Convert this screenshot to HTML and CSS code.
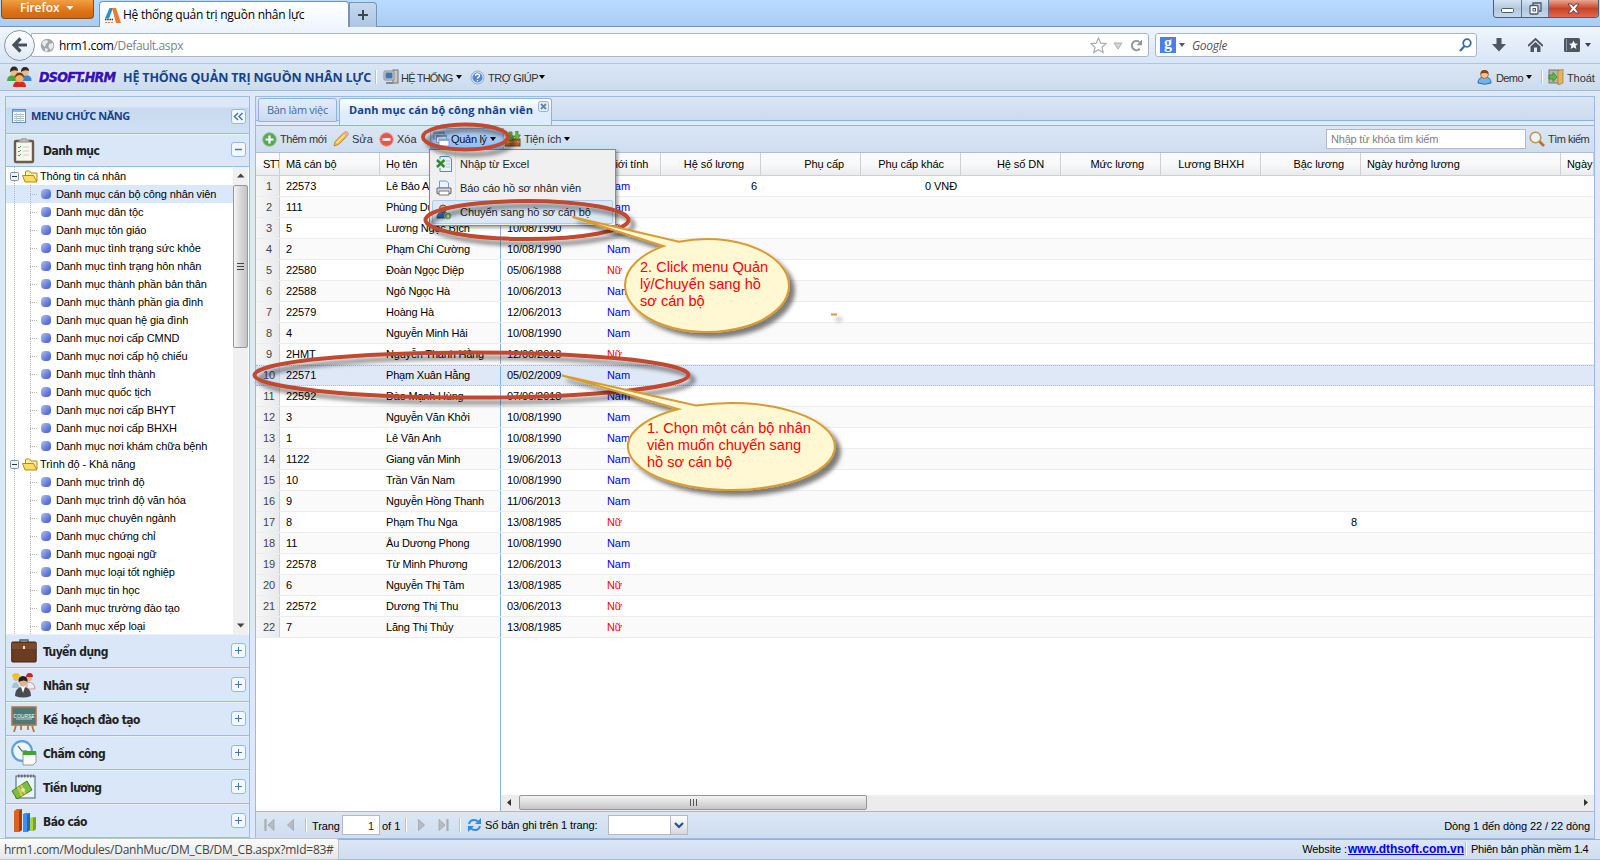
FILE: index.html
```html
<!DOCTYPE html>
<html lang="vi">
<head>
<meta charset="utf-8">
<title>Hệ thống quản trị nguồn nhân lực</title>
<link rel="stylesheet" href="styles.css">
</head>
<body>
<div class="window">
  <div class="titlebar">
    <div class="fx-button">Firefox<i class="caret white"></i></div>
    <div class="fx-tab">
      <svg width="18" height="17" viewBox="0 0 18 17"><path d="M5.500 1H9L5 11.500H1z" fill="#2a8fd0"/><path d="M8 1h4l5 15h-5z" fill="#ee7a2b"/><path d="M1 12.500h8" stroke="#333" stroke-dasharray="1.500 .7" stroke-width="1.600"/><path d="M1 15.500h9" stroke="#ee7a2b" stroke-dasharray="2 1"/></svg>
      <span>Hệ thống quản trị nguồn nhân lực</span>
    </div>
    <div class="fx-newtab"><svg width="12" height="12"><path d="M6 1v10M1 6h10" stroke="#3c4752" stroke-width="2"/></svg></div>
    <div class="fill"></div>
    <div class="win-buttons">
      <div class="wb min"><svg width="13" height="6"><rect x=".5" y=".5" width="12" height="4" rx="1" fill="#fff" stroke="#4b5a68"/></svg></div>
      <div class="wb max"><svg width="13" height="13"><path d="M4 3V1h8v8h-2" fill="none" stroke="#4b5a68" stroke-width="1.3"/><rect x="1" y="3.5" width="8" height="8.5" rx="1" fill="#fff" stroke="#4b5a68" stroke-width="1.3"/><rect x="4" y="6.5" width="2.5" height="2.5" fill="none" stroke="#4b5a68"/></svg></div>
      <div class="wb close"><svg width="13" height="11" viewBox="0 0 13 11"><path d="M1 1h3.4l2 2.4L8.500 1H12L8.500 5.500 12 10H8.500l-2-2.500L4.400 10H1l3.500-4.500z" fill="#fff" stroke="#5a3440" stroke-width=".9"/></svg></div>
    </div>
  </div>

  <div class="navbar">
    <div class="back"><svg width="16" height="16" viewBox="0 0 16 16"><path d="M8.500 1.500L2 8l6.500 6.500M2.500 8H15" fill="none" stroke="#46525e" stroke-width="3.200"/></svg></div>
    <div class="urlbar">
      <svg class="globe" width="15" height="15" viewBox="0 0 15 15"><circle cx="7.500" cy="7.500" r="6.800" fill="#a3a7ab"/><path d="M3 3l4-1 1 2-2 2-1 3-3-3zM9 6l4-1 .5 4-3 3-2-3zM5 10l3 1-1 3-2-1z" fill="#e9ebed"/></svg>
      <span class="url">hrm1.com<em>/Default.aspx</em></span>
      <div class="fill"></div>
      <svg width="17" height="17" viewBox="0 0 17 17"><path d="M8.500 1l2.200 5.100 5.400.5-4.100 3.600 1.200 5.400-4.700-2.900-4.700 2.900L5 10.200.9 6.600l5.400-.5z" fill="#fff" stroke="#a9adb2" stroke-width="1.200"/></svg>
      <svg class="drop" width="10" height="8"><path d="M1 1h8L5 7z" fill="#d2d5d9" stroke="#a9adb2"/></svg>
      <svg width="13" height="13" viewBox="0 0 13 13"><path d="M9.800 9.800A4.600 4.600 0 1 1 9.300 3" fill="none" stroke="#8e959d" stroke-width="2"/><path d="M12 .5v5.700H6.500z" fill="#8e959d"/></svg>
    </div>
    <div class="searchbar">
      <b class="g">g</b><i class="caret gray"></i><em>Google</em><div class="fill"></div>
      <svg width="13" height="14" viewBox="0 0 13 14"><circle cx="8" cy="5" r="3.800" fill="none" stroke="#3d6c9e" stroke-width="1.800"/><path d="M5.500 8L1 13" stroke="#3d6c9e" stroke-width="2.200"/></svg>
    </div>
    <div class="nav-icons">
      <svg width="14" height="14"><path d="M4.500 0h5v6H14l-7 7.500L0 6h4.500z" fill="#4c5761"/></svg>
      <svg width="15" height="14" viewBox="0 0 15 14"><path d="M0 8L7.500 1 15 8" fill="none" stroke="#4c5761" stroke-width="1.800"/><path d="M2.500 8.500l5-4.500 5 4.500V14H9V9.500H6V14H2.500z" fill="#4c5761"/></svg>
      <span class="bm"><svg width="16" height="14" viewBox="0 0 16 14"><rect width="16" height="14" rx="1.500" fill="#4c5761"/><path d="M2.500 1v12" stroke="#8894a0"/><path d="M9.500 2.500l1.300 3 3.200.2-2.400 2 .8 3.300-2.900-1.700-2.900 1.700.8-3.300-2.400-2 3.200-.2z" fill="#fff"/></svg><i class="caret"></i></span>
    </div>
  </div>

  <div class="appbar">
    <svg class="people" width="25" height="22" viewBox="0 0 25 22"><path d="M0 15q0-6 6.500-6t6.500 6z" fill="#4ca63a"/><path d="M12 15q0-6 6.500-6t6 6z" fill="#3d86d4"/><circle cx="7" cy="6" r="3.700" fill="#eebb85"/><circle cx="18" cy="6" r="3.700" fill="#eebb85"/><path d="M3 6q0-5.500 4-5.500T11 5Q7 3 3 6zM14 6q0-5 4-5t4 4q-4-2-8 1z" fill="#2f2925"/><path d="M6 21q0-6 6.500-6t6.500 6z" fill="#d9291c"/><circle cx="12.500" cy="12" r="4.200" fill="#f2b65f"/><path d="M8 12q0-5.500 4.500-5.500T17 12q-2-3-4.500-3T8 12z" fill="#7b3a16"/></svg>
    <span class="logo">DSOFT.HRM</span>
    <span class="app-title">HỆ THỐNG QUẢN TRỊ NGUỒN NHÂN LỰC</span>
    <i class="vsep"></i>
    <svg class="ic-sys" width="16" height="16" viewBox="0 0 16 16"><rect x="10" y="1" width="5" height="13" fill="#c7c9c4" stroke="#777"/><rect x="1" y="2" width="10" height="9" rx="1" fill="#d8d8d2" stroke="#888"/><rect x="2.500" y="3.500" width="7" height="6" fill="#3f75b8"/><path d="M3 14h7" stroke="#888" stroke-width="2"/></svg>
    <span class="t-sys">HỆ THỐNG</span><i class="caret"></i>
    <svg class="ic-help" width="15" height="15" viewBox="0 0 15 15"><circle cx="7.500" cy="7.500" r="6.500" fill="#d8e8f8" stroke="#8fb0d6"/><circle cx="7.500" cy="7.500" r="5" fill="#5689c6"/><path d="M5.500 6q0-2 2-2t2 1.800q0 1-1.200 1.500-.8.400-.8 1.400M7.500 10v1.300" fill="none" stroke="#fff" stroke-width="1.300"/></svg>
    <span class="t-help">TRỢ GIÚP</span><i class="caret"></i>
    <div class="fill"></div>
    <svg width="15" height="16" viewBox="0 0 15 16"><path d="M1 14q0-6 6.500-6T14 14q-6 2.500-13 0z" fill="#6db5ef" stroke="#2d6cb0"/><circle cx="7.500" cy="5.500" r="3.900" fill="#f4c28c" stroke="#8b4a1b" stroke-width=".7"/><path d="M3.500 5Q3.500 1 7.500 1t4 4q-4-2-8 0z" fill="#8c4512"/></svg>
    <span class="t-demo">Demo</span><i class="caret"></i>
    <i class="vsep r"></i>
    <svg width="16" height="16" viewBox="0 0 16 16"><rect x="1" y="1" width="10" height="13" fill="#b4b6ac" stroke="#77786f"/><path d="M10 2l5-2v14l-5 2z" fill="#eab25c" stroke="#a87328" stroke-width=".7"/><path d="M1 6h4V3.500L9 8l-4 4.500V10H1z" fill="#5cbb3d" stroke="#2e7d1c" stroke-width=".7"/></svg>
    <span class="t-exit">Thoát</span>
  </div>

  <div class="workspace">
    <div class="sidebar">
      <div class="side-head">
        <svg width="14" height="14"><rect x=".5" y=".5" width="13" height="13" fill="#fff" stroke="#5d8fc6"/><path d="M1 2h12" stroke="#8db6e4" stroke-width="2"/><path d="M2 5.500h10M2 7.500h10M2 9.500h10M2 11.500h10" stroke="#b7b7a9"/><path d="M4.500 4v9M8.500 4v9" stroke="#b5cfea"/></svg>
        <span>MENU CHỨC NĂNG</span>
        <i class="tool"><svg width="11" height="9"><path d="M5 1L1.500 4.500 5 8M9.500 1L6 4.500 9.500 8" fill="none" stroke="#4479b8" stroke-width="1.500"/></svg></i>
      </div>
      <div class="acc open">
        <svg width="26" height="26" viewBox="0 0 26 26"><rect x="4" y="3" width="18" height="21" rx="1" fill="#f8f7ef" stroke="#6d5b4b" stroke-width="2.400"/><path d="M8 4V2h3V0h4v2h3v2z" fill="#b9b9b9" stroke="#888" stroke-width=".6"/><path d="M7 9l1 1 2-2M7 13l1 1 2-2M7 17l1 1 2-2" fill="none" stroke="#53a544"/><path d="M12 9h6M12 13h6M12 17h6" stroke="#ccc"/></svg>
        <span>Danh mục</span><i class="tool"><svg width="9" height="9"><path d="M1 4.500h7" stroke="#4479b8" stroke-width="1.500"/></svg></i>
      </div>
      <div class="tree-wrap">
        <div class="tree" id="tree"></div>
        <div class="vscroll"><svg width="15" height="18"><path d="M4 10.500h7.500L7.700 6.500z" fill="#444"/></svg><div class="vthumb"><i></i><i></i><i></i></div><div class="fill"></div><svg width="15" height="17"><path d="M4 6.500h7.500L7.700 10.500z" fill="#444"/></svg></div>
      </div>
      <div class="acc">
        <svg width="26" height="26" viewBox="0 0 26 26"><path d="M9 4V2h8v2" fill="none" stroke="#555" stroke-width="1.300"/><rect x=".7" y="4" width="24.500" height="20" rx="1" fill="#6b3d20" stroke="#432513"/><path d="M1 5h24v6H1z" fill="#7d4b2a"/><rect x="12" y="8" width="2" height="3" fill="#f4e8c8"/></svg>
        <span>Tuyển dụng</span><i class="tool plus"></i></div>
      <div class="acc">
        <svg width="26" height="26" viewBox="0 0 26 26"><circle cx="5" cy="6" r="3" fill="#e9b48b"/><path d="M1 5q0-4 4-4t4 4z" fill="#f2c21b"/><path d="M1 16q0-6 5-6l3 6z" fill="#9fc6d9"/><circle cx="18" cy="6" r="3" fill="#e9b48b"/><path d="M15 5q0-4 3.500-4T22 5z" fill="#cf2222"/><path d="M16 10q8 0 8 7h-8z" fill="#eee" stroke="#c99"/><path d="M4 24q0-9 8-9t8 9q-8 3-16 0z" fill="#4a4d50"/><path d="M10 15l2 6 2-6z" fill="#fff"/><circle cx="12" cy="10" r="4.200" fill="#e6b187"/><path d="M7.500 10q-.5-6 4.500-6t4.500 6q-3-3-9 0z" fill="#222"/></svg>
        <span>Nhân sự</span><i class="tool plus"></i></div>
      <div class="acc">
        <svg width="26" height="26" viewBox="0 0 26 26"><path d="M5 19l-2 7M21 19l2 7M10 19v5M17 19v5" stroke="#b87447" stroke-width="1.800"/><rect x="1" y="1" width="24" height="18" fill="#4d7a74" stroke="#b87447" stroke-width="1.600"/><text x="13" y="11.500" class="board">COURSE</text><path d="M5 13h16" stroke="#dfe9e6" stroke-width=".8"/></svg>
        <span>Kế hoạch đào tạo</span><i class="tool plus"></i></div>
      <div class="acc">
        <svg width="26" height="26" viewBox="0 0 26 26"><circle cx="11" cy="11" r="9.800" fill="#eef6fd" stroke="#5b9fdb" stroke-width="2.200"/><path d="M7 6l4 5h5" fill="none" stroke="#555" stroke-width="1.200"/><path d="M12 12h13v10l-3 3H12z" fill="#fafafa" stroke="#999"/><path d="M12 11h13v4H12z" fill="#42a42b"/></svg>
        <span>Chấm công</span><i class="tool plus"></i></div>
      <div class="acc">
        <svg width="26" height="26" viewBox="0 0 26 26"><rect x="5" y="2" width="19" height="22" fill="#eaf3f8" stroke="#49606d"/><path d="M7 2h16" stroke="#667" stroke-width="3" stroke-dasharray="1.500 1.500"/><path d="M1 17l15-10 5 9-15 9z" fill="#7cbf3f" stroke="#477f21"/><path d="M7 13l4 9M10 11l4 9" stroke="#eac346" stroke-width="2"/><circle cx="12" cy="16" r="2" fill="#d6ecb0"/></svg>
        <span>Tiền lương</span><i class="tool plus"></i></div>
      <div class="acc last">
        <svg width="26" height="26" viewBox="0 0 26 26"><path d="M3 3l3-2h5v21l-3 2H3z" fill="#d9641f"/><path d="M8 3l3-2v21l-3 2z" fill="#a33f0b"/><path d="M12 6l2-1h5v17l-3 2h-4z" fill="#3f90ea"/><path d="M16 7l3-2v17l-3 2z" fill="#2566ba"/><path d="M19 10l2-1h4v12l-2 2h-4z" fill="#a8d63e"/><path d="M22 10l3-1v12l-3 2z" fill="#76a71e"/></svg>
        <span>Báo cáo</span><i class="tool plus"></i></div>
    </div>

    <div class="main">
      <div class="tabs">
        <div class="tab">Bàn làm việc</div>
        <div class="tab active">Danh mục cán bộ công nhân viên<svg class="tabx" width="11" height="11"><rect x=".5" y=".5" width="10" height="10" rx="2" fill="#e5effb" stroke="#8fb1dc"/><path d="M3 3l5 5M8 3L3 8" stroke="#5f84b5" stroke-width="1.800"/></svg></div>
      </div>
      <div class="toolbar">
        <svg width="15" height="15"><circle cx="7.500" cy="7.500" r="6.800" fill="#58a754" stroke="#8cc488"/><path d="M7.500 3.500v8M3.500 7.500h8" stroke="#fff" stroke-width="2.200"/></svg>
        <span class="b-add">Thêm mới</span>
        <svg width="16" height="16" viewBox="0 0 16 16"><path d="M1 15l1.200-4.500L11 1.500q2-1.500 3.500 0t0 3.300L5.500 13.500z" fill="#f6bb3d" stroke="#b9832a" stroke-width=".9"/><path d="M3.500 12L12 3.500" stroke="#fde6a2" stroke-width="1.500"/><path d="M11 1.500q2-1.500 3.500 0t0 3.300l-1 1L10 2.500z" fill="#eea99a"/></svg>
        <span class="b-edit">Sửa</span>
        <svg width="15" height="15"><circle cx="7.500" cy="7.500" r="6.800" fill="#e3574e" stroke="#ef9d96"/><path d="M3.500 7.500h8" stroke="#fff" stroke-width="2.600"/></svg>
        <span class="b-del">Xóa</span>
        <div class="b-manage">
          <svg width="17" height="16" viewBox="0 0 17 16"><rect x="1" y="1" width="10" height="7" fill="#c9d9ec" stroke="#7391b8"/><rect x="3.500" y="4.500" width="10" height="7" fill="#dce8f5" stroke="#7391b8"/><rect x="6" y="8" width="10" height="7" fill="#fff" stroke="#86a2c8"/><path d="M1 2h10M3.500 5.500h10M6 9h10" stroke="#6b92c8" stroke-width="1.600"/></svg>
          <span>Quản lý</span><i class="caret"></i>
        </div>
        <svg class="ic-util" width="17" height="16" viewBox="0 0 17 16"><rect x="1" y="8" width="15" height="7" fill="#b3652a" stroke="#7d3f14"/><path d="M1 11h15" stroke="#db9457"/><path d="M5 1h3v4h3L6.500 10 2 5h3zM11 0h3v4h2.500L13 9l-2-2" fill="#6cbb3a" stroke="#357f1b" stroke-width=".7"/></svg>
        <span class="b-util">Tiện ích</span><i class="caret"></i>
        <div class="fill"></div>
        <div class="search">Nhập từ khóa tìm kiếm</div>
        <svg width="16" height="16" viewBox="0 0 16 16"><circle cx="6.500" cy="6.500" r="5.300" fill="#e9f3fb" stroke="#c98e4c" stroke-width="1.500"/><path d="M10.500 10.500l4.500 4.500" stroke="#b8722b" stroke-width="2.600"/></svg>
        <span class="b-find">Tìm kiếm</span>
      </div>

      <div class="grid" id="grid"></div>
      <div class="bottom">
        <div class="lock-foot"></div>
        <div class="hscroll"><svg width="18" height="16"><path d="M10 4v7L6 7.500z" fill="#333"/></svg><div class="hthumb"><i></i><i></i><i></i></div><div class="fill"></div><svg width="17" height="16"><path d="M7 4v7l4-3.500z" fill="#333"/></svg></div>
      </div>
      <div class="pager">
        <svg class="p1" width="11" height="12"><path d="M1.500 0v12" stroke="#a9adb3" stroke-width="2.200"/><path d="M10 .5v11L4 6z" fill="#b8bcc2" stroke="#999ea6" stroke-width=".7"/></svg>
        <svg class="p2" width="7" height="12"><path d="M6.500.5v11L.5 6z" fill="#b8bcc2" stroke="#999ea6" stroke-width=".7"/></svg>
        <i class="vsep s1"></i><span class="p-page">Trang</span><div class="p-num">1</div><span class="p-of">of 1</span><i class="vsep s2"></i>
        <svg class="p3" width="7" height="12"><path d="M.5.5v11L6.500 6z" fill="#b8bcc2" stroke="#999ea6" stroke-width=".7"/></svg>
        <svg class="p4" width="11" height="12"><path d="M9.500 0v12" stroke="#a9adb3" stroke-width="2.200"/><path d="M1 .5v11L7 6z" fill="#b8bcc2" stroke="#999ea6" stroke-width=".7"/></svg>
        <i class="vsep s3"></i>
        <svg class="p5" width="15" height="14" viewBox="0 0 15 14"><path d="M2 6q1-4 5-4 2.500 0 4 1.500" fill="none" stroke="#2e8be0" stroke-width="2"/><path d="M14 0v6H8z" fill="#2e8be0"/><path d="M13 8q-1 4-5 4-2.500 0-4-1.500" fill="none" stroke="#2e8be0" stroke-width="2"/><path d="M1 14V8h6z" fill="#2e8be0"/></svg>
        <span class="p-size">Số bản ghi trên 1 trang:</span>
        <div class="combo"><div class="trigger"><svg width="10" height="7"><path d="M1 1l4 4 4-4" fill="none" stroke="#2c4f8f" stroke-width="2.200"/></svg></div></div>
        <div class="fill"></div>
        <span class="p-info">Dòng 1 đến dòng 22 / 22 dòng</span>
      </div>
    </div>
  </div>

  <div class="footer">
    <span class="f-web">Website :</span><a class="f-link">www.dthsoft.com.vn</a><i class="vsep"></i><span class="f-ver">Phiên bản phần mềm 1.4</span>
  </div>

  <div class="menu">
    <div class="mi"><svg width="16" height="16" viewBox="0 0 16 16"><path d="M4 .5h9l2.500 2.500v12.500H4z" fill="#eaf2fc" stroke="#5a86c0"/><path d="M7 5h7M7 8h7M7 11h7" stroke="#a9c4e4"/><rect y="3" width="10" height="9" fill="#dff0d8"/><path d="M1 4l7.500 7M8.500 4L1 11" stroke="#318a31" stroke-width="2.400"/></svg><span>Nhập từ Excel</span></div>
    <div class="mi"><svg width="16" height="16" viewBox="0 0 16 16"><path d="M3.500 8V1h7l2 2v5z" fill="#eaf3fd" stroke="#6f9dcf"/><path d="M1 8h14v5.500H1z" fill="#d9dbde" stroke="#63686f"/><path d="M3 11h10v4H3z" fill="#fff" stroke="#777"/></svg><span>Báo cáo hồ sơ nhân viên</span></div>
    <div class="mi sel"><svg width="16" height="16" viewBox="0 0 16 16"><circle cx="7" cy="4.500" r="3.500" fill="#d59d70" stroke="#7c4b25"/><path d="M1 14q0-6 6-6t6 6z" fill="#3f79b8" stroke="#275585"/><circle cx="12" cy="12" r="3.500" fill="#4ea13e" stroke="#fff" stroke-width=".6"/><path d="M12 10v4M10 12h4" stroke="#fff" stroke-width="1.200"/></svg><span>Chuyển sang hồ sơ cán bộ</span></div>
  </div>

  <svg class="notes" width="1600" height="860">
    <defs><filter id="sh" x="-20%" y="-40%" width="150%" height="200%"><feDropShadow dx="5" dy="5" stdDeviation="2" flood-color="#000" flood-opacity=".5"/></filter></defs>
    <g fill="none" stroke="#c0482f" stroke-width="4" filter="url(#sh)">
      <ellipse cx="465.500" cy="137" rx="42.500" ry="12.500"/>
      <ellipse cx="527" cy="220" rx="101.500" ry="19"/>
      <ellipse cx="471.500" cy="375" rx="217" ry="22.500"/>
    </g>
    <g fill="#fff8d3" stroke="#d99b2e" stroke-width="2" filter="url(#sh)">
      <path d="M572.500 217L679 241.800A82 46.500 0 1 1 663.500 246.083z"/>
      <path d="M562 375.500L696 405.600A103.500 43.500 0 1 1 678.500 409.080z"/>
      <path d="M831 314.500h6"/>
    </g>
    <g class="note-text">
      <text x="640" y="272">2. Click menu Quản</text><text x="640" y="289">lý/Chuyển sang hồ</text><text x="640" y="306">sơ cán bộ</text>
      <text x="647" y="433">1. Chọn một cán bộ nhân</text><text x="647" y="450">viên muốn chuyển sang</text><text x="647" y="467">hồ sơ cán bộ</text>
    </g>
  </svg>
  <div class="status">hrm1.com/Modules/DanhMuc/DM_CB/DM_CB.aspx?mId=83#</div>
</div>
<script src="app.js"></script>
</body>
</html>
```
FILE: styles.css
```css
* { box-sizing: border-box; }
body { margin: 0; background: #dfe8f6; font: 11px/14px "Liberation Sans", Arial, sans-serif; color: #000; overflow: hidden; }
svg { display: block; flex: none; }
i, em { font-style: normal; }
.window { position: relative; width: 1600px; height: 860px; display: flex; flex-direction: column; overflow: hidden; white-space: nowrap; }
.fill { flex: 1; }
.caret { flex: none; width: 6px; height: 4px; background: #000; clip-path: polygon(0 0, 100% 0, 50% 100%); margin-left: 2px; }
.vsep { flex: none; width: 2px; height: 14px; background: #98c8ff; border-right: 1px solid #fff; }

.titlebar { height: 27px; display: flex; align-items: flex-start; padding: 0 1px; background: linear-gradient(#b9dbff, #a9cdf4); border-bottom: 1px solid #7894b0; font-family: "Open Sans", sans-serif; }
.fx-button { width: 93px; height: 19px; padding: 0 0 2px 18px; display: flex; align-items: center; background: linear-gradient(#f0a044, #dd7415 60%, #cf6a10); border: 1px solid #8c4b14; border-top: 0; border-radius: 0 0 4px 4px; color: #fff; font-weight: 600; font-size: 12px; letter-spacing: -.1px; }
.caret.white { width: 7px; height: 4px; background: #fff; margin-left: 7px; }
.fx-tab { width: 250px; height: 27px; margin: 1px 0 -1px 5px; padding-left: 4px; display: flex; align-items: center; gap: 1px; background: linear-gradient(#fff, #eff6fe); border: 1px solid #7894b0; border-bottom: 0; border-radius: 4px 4px 0 0; font-size: 12px; letter-spacing: -.25px; }
.fx-newtab { width: 28px; height: 25px; margin-top: 2px; display: grid; place-items: center; background: linear-gradient(#c4d9ee, #adc6e0); border: 1px solid #7894b0; border-radius: 0 4px 0 0; border-bottom: 0; }
.win-buttons { display: flex; height: 18px; border: 1px solid #4b5f74; border-top: 0; border-radius: 0 0 4px 4px; overflow: hidden; }
.wb { display: grid; place-items: center; background: linear-gradient(#d6e4f2, #b3c8de 50%, #c3d8ec); border-right: 1px solid #5e7489; }
.min { width: 28px; padding-top: 4px; } .max { width: 27px; }
.close { width: 49px; border: 0; background: linear-gradient(#eaa793, #c9432a 50%, #e0694c); }

.navbar { height: 37px; display: flex; align-items: center; padding: 0 9px 0 4px; background: linear-gradient(#eef5fd, #d9e5f5); border-bottom: 1px solid #b0c4da; font-family: "Open Sans", sans-serif; font-size: 12px; }
.back { width: 31px; height: 31px; border-radius: 50%; border: 1px solid #8394a6; background: linear-gradient(#fff, #dfe9f4); display: grid; place-items: center; z-index: 1; }
.urlbar { width: 1118px; height: 24px; margin-left: -4px; padding: 0 5px 0 8px; display: flex; align-items: center; background: #fff; border: 1px solid #a9b6c4; border-radius: 0 3px 3px 0; }
.url { margin: 1px 0 0 4px; letter-spacing: -.37px; } .url em { color: #7d8288; }
.urlbar > svg:nth-of-type(2) { margin-right: -4px; }
.drop { margin: 2px 7px 0 10px; }
.searchbar { width: 322px; height: 24px; margin-left: 6px; padding: 0 4px; display: flex; align-items: center; background: #fff; border: 1px solid #a9b6c4; border-radius: 3px; }
.g { width: 16px; height: 16px; background: #4a7df0; color: #fff; font: bold 16px/12px "Liberation Serif", serif; text-align: center; }
.caret.gray { background: #555; margin-left: 3px; }
.searchbar em { margin: 1px 0 0 7px; font-style: italic; color: #555; letter-spacing: -.3px; }
.nav-icons { flex: 1; margin-left: 15px; display: flex; justify-content: space-between; align-items: center; }
.bm { display: flex; align-items: center; } .bm .caret { width: 6px; height: 4px; background: #39434c; margin-left: 5px; }

.appbar { height: 27px; display: flex; align-items: center; padding: 0 5px 0 7px; background: linear-gradient(#dae6f3, #cddcec); border-bottom: 1px solid #9cbfd0; color: #333; }
.logo { margin-left: 7px; width: 77px; font: italic bold 14px/20px "DejaVu Sans Condensed", "DejaVu Sans", sans-serif; color: #3312b8; letter-spacing: -.7px; -webkit-text-stroke: .5px #3312b8; text-shadow: 0 0 2px #fff, 0 0 2px #fff, 0 0 3px #fff; }
.app-title { margin: 1px 0 0 7px; width: 248px; font: bold 12.500px/16px "Open Sans", sans-serif; color: #15428b; letter-spacing: -.16px; }
.appbar .vsep { margin-left: 4px; }
.ic-sys { margin-left: 6px; } .t-sys { margin: 1px 0 0 2px; width: 53px; letter-spacing: -.8px; }
.ic-help { margin-left: 8px; } .t-help { margin: 1px 0 0 3px; width: 49px; letter-spacing: -.5px; }
.t-demo { margin: 1px 0 0 4px; width: 28px; letter-spacing: -.6px; } .appbar .vsep.r { margin: 0 5px 0 9px; }
.t-exit { margin: 1px 0 0 3px; width: 28px; letter-spacing: -.1px; }

.workspace { flex: 1; display: flex; padding: 5px 5px 0; gap: 5px; min-height: 0; }
.sidebar { width: 245px; display: flex; flex-direction: column; border: 1px solid #99bbe8; border-bottom: 0; padding-bottom: 1px; }
.side-head { height: 37px; padding: 2px 3px 0 6px; display: flex; align-items: center; background: linear-gradient(#dde8f6 0 10px, #c8d9f0 11px, #d0dff3); border-bottom: 1px solid #99bbe8; color: #15428b; font: bold 11px/14px "Open Sans", sans-serif; }
.side-head span { margin-left: 5px; letter-spacing: -.45px; }
.tool { width: 15px; height: 15px; margin-left: auto; display: grid; place-items: center; background: #f3f8ff; border: 1px solid #94b8e6; border-radius: 3px; }
.tool.plus { background: linear-gradient(#4479b8, #4479b8) center/7px 1px no-repeat, linear-gradient(#4479b8, #4479b8) center/1px 7px no-repeat, #f3f8ff; }
.acc { height: 34px; flex: none; display: flex; align-items: center; padding: 0 3px 0 5px; background: #d9e7f8; border-bottom: 1px solid #99bbe8; border-top: 1px solid #e8f1fb; font: bold 12px/16px "DejaVu Sans Condensed", "DejaVu Sans", sans-serif; color: #222; }
.acc.open { height: 33px; }
.acc span { margin: 1px 0 0 6px; letter-spacing: -.55px; }
.acc .tool { margin-top: -3px; } .acc .tool.plus { margin-top: -1px; }
.board { font: italic 5px "Liberation Sans", sans-serif; fill: #fff; text-anchor: middle; }
.tree-wrap { flex: 1; display: flex; background: #fff; min-height: 0; }
.tree { flex: 1; overflow: hidden; }
.node { height: 18px; display: flex; align-items: center; padding-left: 35px; letter-spacing: -.12px; background: repeating-linear-gradient(#b5b5b5 0 1px, transparent 1px 2px) 8px 0/1px 100% no-repeat, repeating-linear-gradient(#b5b5b5 0 1px, transparent 1px 2px) 24px 0/1px 100% no-repeat, repeating-linear-gradient(90deg, #b5b5b5 0 1px, transparent 1px 2px) 24px 9px/7px 1px no-repeat; }
.node::before { content: ""; width: 10px; height: 10px; margin-right: 5px; border-radius: 4px; background: linear-gradient(135deg, #b4c0f2, #6079d8 65%, #4b64c8); }
.node.on { background-color: #d9e8fb; }
.node.folder { padding-left: 4px; background: repeating-linear-gradient(#b5b5b5 0 1px, transparent 1px 2px) 8px 0/1px 100% no-repeat; } .node.folder::before { display: none; }
.node .exp { margin-right: 3px; } .node .fold { margin-right: 2px; }
.vscroll { width: 15px; margin-right: 1px; background: #f0f0f1; display: flex; flex-direction: column; }
.vthumb { height: 163px; border: 1px solid #979797; border-radius: 2px; background: linear-gradient(90deg, #f5f5f5, #d8d8da 50%, #c4c4c8); display: flex; flex-direction: column; align-items: center; justify-content: center; gap: 2px; }
.vthumb i { width: 7px; height: 1px; background: #444; }

.main { flex: 1; display: flex; flex-direction: column; border: 1px solid #99bbe8; min-width: 0; background: #fff; }
.tabs { height: 29px; padding: 1px 0 0 2px; display: flex; gap: 2px; background: linear-gradient(#dbe6f5, #cbdbef 23px, #8db2e3 23px, #8db2e3 24px, #deecfd 24px); border-bottom: 1px solid #8db2e3; font: 11px/14px "Open Sans", sans-serif; color: #416aa3; }
.tab { width: 79px; height: 24px; padding: 4px 0 0 8px; border: 1px solid #8db2e3; border-radius: 3px 3px 0 0; background: linear-gradient(#e3edfa, #c9dbf2); letter-spacing: -.3px; }
.tab.active { width: 213px; height: 27px; padding-left: 9px; position: relative; border-bottom: 0; background: linear-gradient(#fff, #deecfd 14px); color: #15428b; font-weight: bold; letter-spacing: .1px; }
.tabx { position: absolute; right: 2px; top: 2px; }
.toolbar { height: 27px; display: flex; align-items: center; padding: 0 6px; background: linear-gradient(#dae6f4, #cfddef); border-bottom: 1px solid #a9bfd3; color: #333; }
.b-add { margin-left: 3px; width: 53px; letter-spacing: -.45px; } .b-edit { margin-left: 3px; width: 27px; } .b-del { margin-left: 3px; width: 33px; }
.b-manage { width: 74px; height: 22px; padding-left: 2px; display: flex; align-items: center; border: 1px solid #8cabd6; background: linear-gradient(#b9d3f3, #8dbafa); color: #111; }
.b-manage span { width: 37px; margin-left: 1px; letter-spacing: -.3px; }
.b-util { margin-left: 3px; width: 38px; letter-spacing: -.2px; }
.search { width: 200px; height: 20px; padding: 2px 4px; background: #fff; border: 1px solid #b5b8c8; color: #808080; margin-right: 3px; letter-spacing: -.2px; }
.b-find { margin-left: 3px; width: 40px; letter-spacing: -.5px; }

.grid { flex: 1; display: flex; flex-direction: column; min-height: 0; background: linear-gradient(#8db2e3, #8db2e3) 244px 0/1px 100% no-repeat; letter-spacing: -.08px; }
.row { flex: none; height: 21px; display: grid; grid-template-columns: 24px 100px 121px 100px 60px repeat(7, 100px) 200px 33px; border-bottom: 1px solid #ededed; }
.row span { padding: 3px 6px 0; overflow: hidden; border: 0; }
.row span:nth-child(3) { border-right: 1px solid #8db2e3; letter-spacing: -.2px; }
.row span:nth-child(n+6):nth-child(-n+12) { text-align: right; padding-right: 4px; }
.row span:first-child { background: linear-gradient(90deg, #f7f7f7, #e8eaed); border-right: 1px solid #d0d0d0; color: #444; text-align: center; padding: 3px 0 0 3px; }
.row:nth-child(odd) { background-color: #fafafa; }
.row.hd { height: 23px; background: linear-gradient(#fafafa, #f9f9f9 50%, #e9ebee); border-bottom: 1px solid #d0d0d0; }
.row.hd span { padding-top: 4px; border-right: 1px solid #d0d0d0; }
.row.hd span:first-child { background: none; padding: 4px 0 0 7px; color: #000; text-align: left; letter-spacing: -.6px; }
.row.hd span:nth-child(n+6):nth-child(-n+12) { padding-right: 16px; }
.row.sel { background: #dfe8f6; border-top: 1px dotted #a3bae9; border-bottom: 1px dotted #a3bae9; }
.row.sel span:first-child { background: #d4e0f2; } .row.sel span { padding-top: 2px; }
.male { color: #00f; } .female { color: #f00; }
.bottom { flex: none; height: 17px; display: flex; border-bottom: 1px solid #99bbe8; }
.lock-foot { width: 245px; border-right: 1px solid #8db2e3; }
.hscroll { flex: 1; display: flex; background: #ececec; }
.hthumb { width: 348px; height: 15px; border: 1px solid #979797; border-radius: 2px; background: linear-gradient(#f4f4f4, #dcdcdc 50%, #c6c6c6); display: flex; align-items: center; justify-content: center; gap: 2px; }
.hthumb i { width: 1px; height: 7px; background: #555; }
.pager { flex: none; height: 26px; display: flex; align-items: center; padding: 0 4px 0 8px; background: linear-gradient(#dbe7f4, #cfddef); }
.p2 { margin-left: 12px; } .s1 { margin-left: 11px; } .p-page { margin: 1px 0 0 5px; width: 30px; letter-spacing: -.1px; }
.p-num { width: 38px; height: 20px; padding: 3px 5px; text-align: right; background: #fff; border: 1px solid #b5b8c8; color: #222; }
.p-of { margin: 1px 0 0 2px; width: 23px; } .p3 { margin-left: 11px; } .p4 { margin-left: 13px; } .s3 { margin-left: 10px; }
.p5 { margin-left: 6px; } .p-size { margin-left: 3px; width: 123px; letter-spacing: -.1px; }
.combo { width: 80px; height: 20px; background: #fff; border: 1px solid #b5b8c8; display: flex; justify-content: flex-end; }
.trigger { width: 17px; border-left: 1px solid #b5b8c8; background: linear-gradient(#fff, #d5d8de); display: grid; place-items: center; }
.p-info { letter-spacing: -.1px; margin-top: 2px; }

.footer { height: 21px; display: flex; align-items: center; justify-content: flex-end; padding: 0 11px 2px 0; background: linear-gradient(#dbe7f4, #cfddef); border-top: 1px solid #8db2e3; border-bottom: 1px solid #99bbe8; }
.f-web { letter-spacing: -.1px; }
.f-link { margin-left: 1px; width: 117px; font-weight: bold; font-size: 12px; letter-spacing: -.05px; color: #00f; text-decoration: underline; }
.f-ver { margin-left: 4px; width: 118px; letter-spacing: -.25px; }

.menu { position: absolute; left: 429px; top: 149px; width: 187px; height: 77px; padding: 2px; background: linear-gradient(#e0e0e0, #e0e0e0) 25px 0/1px 100% no-repeat, #f0f0f0; border: 1px solid #6c8fbd; box-shadow: 2px 2px 3px rgba(0,0,0,.35); color: #222; }
.mi { height: 24px; display: flex; align-items: center; padding-left: 3px; border: 1px solid transparent; }
.mi span { margin-left: 8px; letter-spacing: -.05px; }
.mi.sel { border-color: #a9cbf5; background: #dce8f6; border-radius: 2px; }
.notes { position: absolute; left: 0; top: 0; pointer-events: none; }
.note-text { font: 14.600px "Liberation Sans", Arial, sans-serif; fill: #f00; }
.status { position: absolute; left: 0; bottom: 0; width: 339px; height: 22px; padding: 2px 0 0 4px; background: linear-gradient(#fbfbfb, #e6e7e8); border: 1px solid #c0c4c9; border-left: 0; border-radius: 0 3px 0 0; font: 12px/17px "Open Sans", sans-serif; color: #444; letter-spacing: -.25px; }
```
FILE: app.js
```js
const dm = 'Danh mục ';
const groups = [
  ['Thông tin cá nhân', ['cán bộ công nhân viên', 'dân tộc', 'tôn giáo', 'tình trạng sức khỏe', 'tình trạng hôn nhân', 'thành phần bản thân', 'thành phần gia đình', 'quan hệ gia đình', 'nơi cấp CMND', 'nơi cấp hộ chiếu', 'tỉnh thành', 'quốc tịch', 'nơi cấp BHYT', 'nơi cấp BHXH', 'nơi khám chữa bệnh']],
  ['Trình độ - Khả năng', ['trình độ', 'trình độ văn hóa', 'chuyên ngành', 'chứng chỉ', 'ngoại ngữ', 'loại tốt nghiệp', 'tin học', 'trường đào tạo', 'xếp loại']]
];
const folder = '<svg class="exp" width="9" height="9"><rect x=".5" y=".5" width="8" height="8" rx="1" fill="#eef3f8" stroke="#7b93ad"/><path d="M2 4.500h5" stroke="#234"/></svg>' +
  '<svg class="fold" width="16" height="13" viewBox="0 0 16 13"><path d="M3.500 11V2q0-1 1-1h3l1.500 2h6v8z" fill="#fdf0a8" stroke="#b08a1f"/><path d="M.5 5.500h11l3.500 6.500H3z" fill="#f9dc60" stroke="#b08a1f"/></svg>';
document.getElementById('tree').innerHTML = groups.map(([name, items], g) =>
  `<div class="node folder">${folder}${name}</div>` +
  items.map((t, i) => `<div class="node${g + i === 0 ? ' on' : ''}">${dm}${t}</div>`).join('')).join('');

const heads = ['STT', 'Mã cán bộ', 'Họ tên', 'Ngày sinh', 'Giới tính', 'Hệ số lương', 'Phụ cấp', 'Phụ cấp khác', 'Hệ số DN', 'Mức lương', 'Lương BHXH', 'Bậc lương', 'Ngày hưởng lương', 'Ngày'];
const people = `22573|Lê Bảo Anh|10/08/1990|Nam
111|Phùng Dung|10/08/1990|Nam
5|Lương Ngọc Bích|10/08/1990|Nữ
2|Phạm Chí Cường|10/08/1990|Nam
22580|Đoàn Ngọc Diệp|05/06/1988|Nữ
22588|Ngô Ngọc Hà|10/06/2013|Nam
22579|Hoàng Hà|12/06/2013|Nam
4|Nguyễn Minh Hải|10/08/1990|Nam
2HMT|Nguyễn Thanh Hằng|12/06/2013|Nữ
22571|Phạm Xuân Hằng|05/02/2009|Nam
22592|Đào Mạnh Hùng|07/06/2013|Nam
3|Nguyễn Văn Khởi|10/08/1990|Nam
1|Lê Văn Anh|10/08/1990|Nam
1122|Giang văn Minh|19/06/2013|Nam
10|Trần Văn Nam|10/08/1990|Nam
9|Nguyễn Hồng Thanh|11/06/2013|Nam
8|Phạm Thu Nga|13/08/1985|Nữ
11|Âu Dương Phong|10/08/1990|Nam
22578|Từ Minh Phương|12/06/2013|Nam
6|Nguyễn Thị Tâm|13/08/1985|Nữ
22572|Dương Thị Thu|03/06/2013|Nữ
7|Lăng Thị Thủy|13/08/1985|Nữ`.split('\n').map(r => r.split('|'));
const extra = { 1: ['6', '', '0 VNĐ'], 17: ['', '', '', '', '', '', '8'] };
const cells = a => a.map(c => `<span${c === 'Nam' ? ' class="male"' : c === 'Nữ' ? ' class="female"' : ''}>${c}</span>`).join('');
document.getElementById('grid').innerHTML = `<div class="row hd">${cells(heads)}</div>` +
  people.map((p, i) => `<div class="row${i === 9 ? ' sel' : ''}">${cells([i + 1, ...p, ...(extra[i + 1] || [])])}</div>`).join('');
```
